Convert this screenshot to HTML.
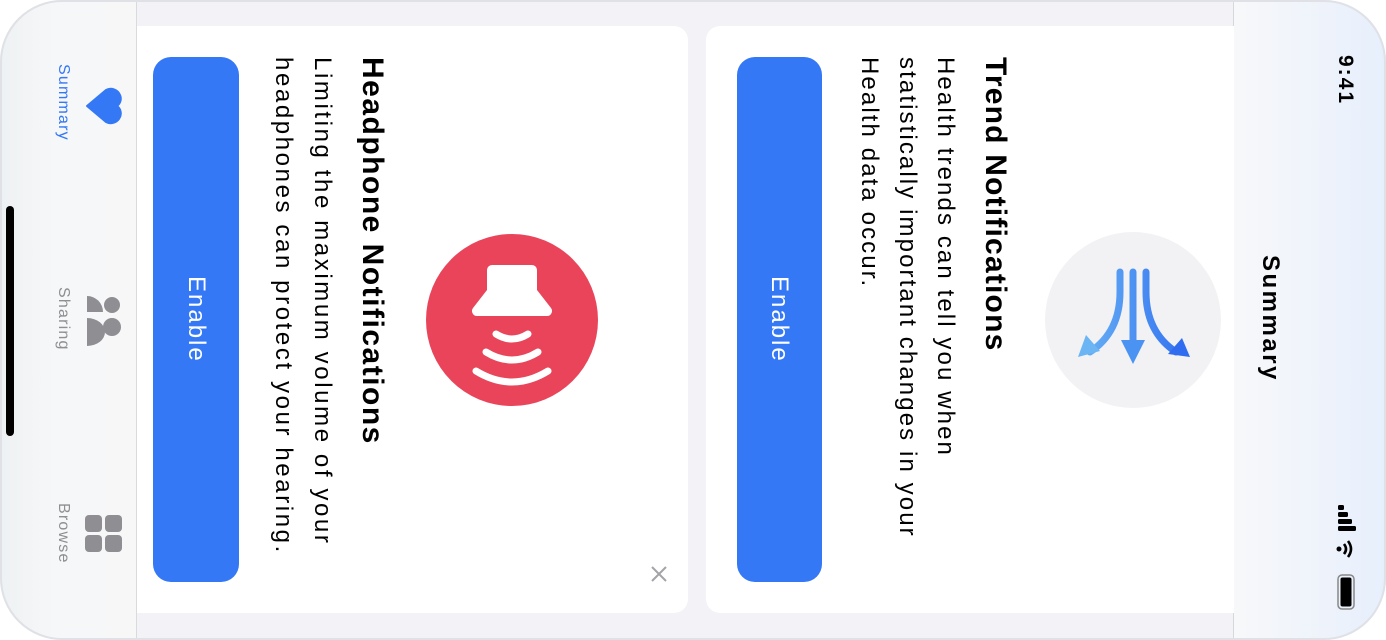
<!DOCTYPE html>
<html><head><meta charset="utf-8"><style>
*{margin:0;padding:0;box-sizing:border-box}
html,body{width:1386px;height:640px;overflow:hidden;background:#fff;font-family:"Liberation Sans",sans-serif}
.abs{position:absolute}
.v{writing-mode:vertical-rl;white-space:nowrap}
</style></head><body>
<div class="abs" style="left:0;top:0;width:1386px;height:640px;border-radius:62px;overflow:hidden;background:#f2f2f7">
  <div class="abs" style="left:1233px;top:0;width:153px;height:640px;background:linear-gradient(90deg,#f7f8fa 0%,#eef3fb 60%,#e6effc 100%);border-left:1px solid #d6d8dc"></div>
  <div class="abs" style="left:0;top:0;width:137px;height:640px;background:linear-gradient(90deg,#eef1f3 0%,#f6f7f8 40%,#f7f7f8 100%);border-right:1px solid #d9dadd"></div>
  <div class="abs" style="left:137px;top:26px;width:551px;height:587px;background:#fff;border-radius:0 14px 14px 0"></div>
  <div class="abs" style="left:706px;top:26px;width:528px;height:587px;background:#fff;border-radius:14px 0 0 14px"></div>
  <div class="abs" style="left:153px;top:57px;width:86px;height:525px;background:#3478f6;border-radius:18px"></div>
  <div class="abs v" style="left:153px;top:57px;width:86px;height:525px;color:#fff;font-size:24px;letter-spacing:2px;text-align:center;line-height:86px">Enable</div>
  <div class="abs" style="left:737px;top:57px;width:85px;height:525px;background:#3478f6;border-radius:18px"></div>
  <div class="abs v" style="left:737px;top:57px;width:85px;height:525px;color:#fff;font-size:24px;letter-spacing:2px;text-align:center;line-height:85px">Enable</div>
  <div class="abs v" style="left:352px;top:57px;width:40px;line-height:40px;font-size:30px;letter-spacing:1.5px;font-weight:bold;color:#000">Headphone Notifications</div>
  <div class="abs v" style="left:264px;top:57px;width:78px;line-height:39px;font-size:24px;letter-spacing:2.6px;color:#000">Limiting the maximum volume of your<br>headphones can protect your hearing.</div>
  <div class="abs v" style="left:975px;top:57px;width:40px;line-height:40px;font-size:30px;letter-spacing:1.2px;font-weight:bold;color:#000">Trend Notifications</div>
  <div class="abs v" style="left:850px;top:57px;width:114px;line-height:38px;font-size:24px;letter-spacing:2.1px;color:#000">Health trends can tell you when<br>statistically important changes in your<br>Health data occur.</div>
  <svg class="abs" style="left:426px;top:234px" width="172" height="172" viewBox="0 0 172 172">
    <circle cx="86" cy="86" r="86" fill="#e9445a"/>
    <path d="M66 31 h40 a5 5 0 0 1 5 5 v20 l14 18 a5 5 0 0 1 -4 8 h-70 a5 5 0 0 1 -4 -8 l14 -18 v-20 a5 5 0 0 1 5 -5z" fill="#fff"/>
    <path d="M70 100 q16 10 32 0" stroke="#fff" stroke-width="7" fill="none" stroke-linecap="round"/>
    <path d="M60 118 q26 16 52 0" stroke="#fff" stroke-width="7" fill="none" stroke-linecap="round"/>
    <path d="M50 137 q36 22 72 0" stroke="#fff" stroke-width="7" fill="none" stroke-linecap="round"/>
  </svg>
  <svg class="abs" style="left:1045px;top:232px" width="176" height="176" viewBox="0 0 176 176">
    <defs><linearGradient id="g" gradientUnits="userSpaceOnUse" x1="30" y1="0" x2="150" y2="0"><stop offset="0" stop-color="#6bb5f5"/><stop offset="1" stop-color="#2f6cf0"/></linearGradient></defs>
    <circle cx="88" cy="88" r="88" fill="#f2f2f4"/>
    <g stroke="url(#g)" stroke-width="7" fill="none" stroke-linecap="round">
      <path d="M75 40 v20 q0 40 -30 60"/>
      <path d="M88 40 v70"/>
      <path d="M101 40 v20 q0 40 30 60"/>
    </g>
    <path d="M33 125 l8 -22 l14 16z" fill="#6bb5f5"/>
    <path d="M76 108 h24 l-12 24z" fill="#4a93f3"/>
    <path d="M145 125 l-22 -3 l14 -16z" fill="#2f6cf0"/>
  </svg>
  <svg class="abs" style="left:650px;top:565px" width="18" height="18" viewBox="0 0 18 18"><path d="M2 2L16 16M16 2L2 16" stroke="#a3a3a8" stroke-width="2"/></svg>
  <div class="abs v" style="left:1330px;top:55px;width:30px;line-height:30px;font-size:21px;letter-spacing:2px;font-weight:bold;color:#000">9:41</div>
  <div class="abs v" style="left:1252px;top:255px;width:36px;line-height:36px;font-size:24px;letter-spacing:2.5px;font-weight:bold;color:#000">Summary</div>
  <svg class="abs" style="left:1334px;top:502px" width="26" height="112" viewBox="0 0 26 112">
    <rect x="4" y="3" width="6" height="5" rx="1.5"/><rect x="4" y="10" width="10" height="5" rx="1.5"/><rect x="4" y="17" width="14" height="5" rx="1.5"/><rect x="4" y="24" width="18" height="5" rx="1.5"/>
    <circle cx="5" cy="47" r="2.5"/>
    <path d="M10 42 q4 5 0 10" stroke="#000" stroke-width="2.6" fill="none"/>
    <path d="M14 39 q6 8 0 16" stroke="#000" stroke-width="2.6" fill="none"/>
    <rect x="4" y="73" width="16" height="34" rx="4" fill="none" stroke="#888" stroke-width="1.5"/>
    <rect x="6.5" y="75.5" width="11" height="29" rx="2"/>
  </svg>
  <div class="abs v" style="left:53px;top:64px;width:20px;line-height:20px;font-size:16px;letter-spacing:1.2px;color:#3478f6">Summary</div>
  <svg class="abs" style="left:84px;top:85px" width="40" height="42" viewBox="0 0 40 42"><path d="M3 21 L22 5 a10 10 0 0 1 14 5 a9 9 0 0 1 -3 11 a9 9 0 0 1 3 11 a10 10 0 0 1 -14 5z" fill="#3478f6" stroke="#3478f6" stroke-width="2" stroke-linejoin="round"/></svg>
  <div class="abs v" style="left:53px;top:287px;width:20px;line-height:20px;font-size:16px;letter-spacing:1.2px;color:#8e8e93">Sharing</div>
  <svg class="abs" style="left:84px;top:292px" width="40" height="56" viewBox="0 0 40 56">
    <path d="M3 4 a16 16 0 0 1 16 16 h-16z" fill="#8e8e93"/>
    <path d="M3 26 a18 14 0 0 1 18 14 a18 14 0 0 1 -18 14z" fill="#8e8e93"/>
    <circle cx="28" cy="13" r="8" fill="#8e8e93"/>
    <circle cx="28" cy="35" r="9" fill="#8e8e93"/>
  </svg>
  <div class="abs v" style="left:53px;top:503px;width:20px;line-height:20px;font-size:16px;letter-spacing:1.2px;color:#8e8e93">Browse</div>
  <svg class="abs" style="left:85px;top:515px" width="38" height="38" viewBox="0 0 38 38" fill="#8e8e93">
    <rect x="0" y="0" width="17" height="17" rx="4"/><rect x="20" y="0" width="17" height="17" rx="4"/><rect x="0" y="20" width="17" height="17" rx="4"/><rect x="20" y="20" width="17" height="17" rx="4"/>
  </svg>
  <div class="abs" style="left:6px;top:206px;width:8px;height:230px;background:#000;border-radius:4px"></div>
</div>
<div class="abs" style="left:0;top:0;width:1386px;height:640px;border-radius:62px;border:2px solid #dfe1e6"></div>
</body></html>
